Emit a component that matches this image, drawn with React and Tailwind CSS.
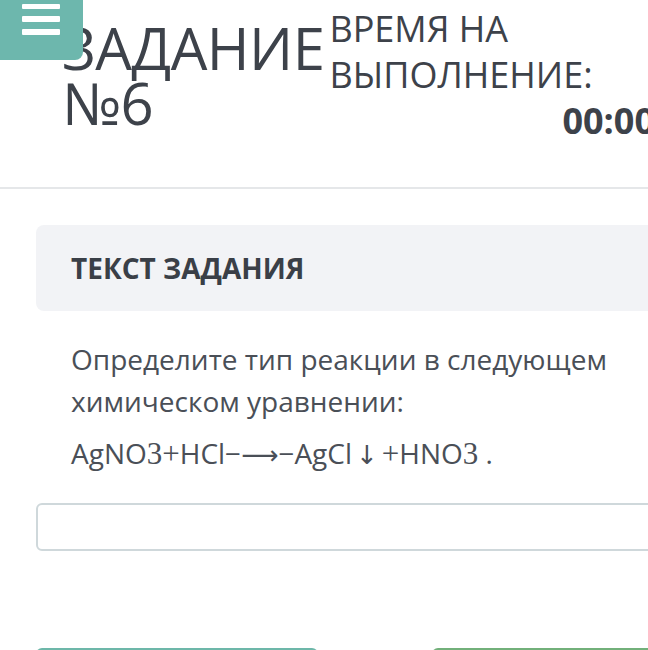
import { useState } from "react";

const MenuButton = () => {
  return (
    <button className="absolute left-0 top-0 flex h-[60px] w-[83px] flex-col items-center justify-start gap-[7px] rounded-br-lg bg-[#6db7ad] pt-[4px] pr-[2px]">
      <span className="block h-[5px] w-[38px] rounded-[1px] bg-white" />
      <span className="block h-[6px] w-[38px] rounded-[1px] bg-white" />
      <span className="block h-[6px] w-[38px] rounded-[1px] bg-white" />
    </button>
  );
};

const Serif = ({ children }) => (
  <span className="font-['Liberation_Serif',serif] text-[31px]">{children}</span>
);

export default function App() {
  const [answer, setAnswer] = useState("");

  return (
    <div className="relative h-[650px] w-[648px] overflow-hidden bg-white font-['Open_Sans',sans-serif] text-[#3d424a]">
      <header className="flex h-[189px] w-[900px] items-start border-b-2 border-[#e5e7e9]">
        <h1 className="pl-[62px] pt-[20px] text-[58px] font-normal leading-[55px] tracking-[-0.5px]">
          ЗАДАНИЕ
          <br />
          №6
        </h1>
        <div className="ml-[5px] w-[380px] pt-[6px]">
          <p className="text-[36px] leading-[46px]">
            ВРЕМЯ НА
            <br />
            ВЫПОЛНЕНИЕ:
          </p>
          <p className="pl-[233px] text-[36px] font-bold leading-[46px]">00:00:00</p>
        </div>
      </header>

      <main className="w-[900px] pl-[36px]">
        <div className="mt-[36px] flex h-[86px] items-center rounded-lg bg-[#f2f3f6] pl-[35px]">
          <h2 className="text-[28px] font-bold text-[#3a3f47]">ТЕКСТ ЗАДАНИЯ</h2>
        </div>

        <div className="pl-[35px] text-[#4a4f57]">
          <p className="mt-[27px] w-[580px] text-[28px] leading-[42px]">
            Определите тип реакции в следующем химическом уравнении:
          </p>
          <p className="mt-[10px] whitespace-nowrap text-[28px] leading-[42px]">
            AgNO<Serif>3</Serif>
            <Serif>+</Serif>HCl−
            <span className="font-['DejaVu_Sans',sans-serif] text-[26px]">⟶</span>
            −AgCl
            <span className="px-[4px] font-['DejaVu_Sans',sans-serif] text-[26px]">↓</span>
            <Serif>+</Serif>HNO<Serif>3</Serif> .
          </p>
        </div>

        <input
          className="mt-[27px] block h-[48px] w-[700px] rounded-md border-2 border-[#cfd8db] bg-white px-3 text-[24px] outline-none"
          value={answer}
          onChange={(e) => setAnswer(e.target.value)}
        />

        <div className="mt-[97px] flex gap-[114px]">
          <button className="h-[50px] w-[282px] rounded-md bg-[#6db7a9]" />
          <button className="h-[50px] w-[282px] rounded-md bg-[#72b07a]" />
        </div>
      </main>

      <MenuButton />
    </div>
  );
}
